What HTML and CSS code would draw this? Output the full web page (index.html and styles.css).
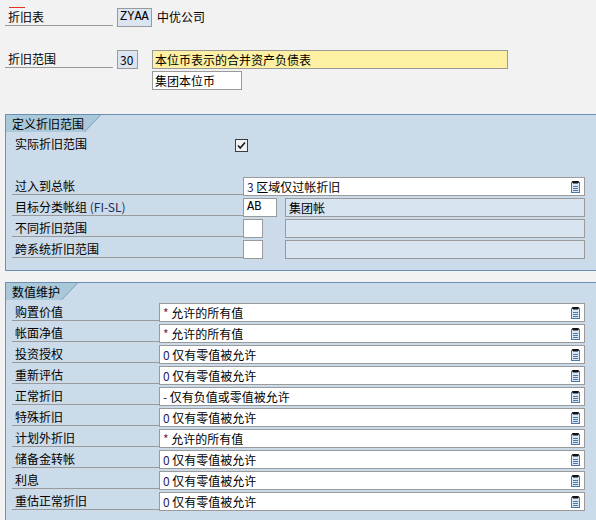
FILE: index.html
```html
<!DOCTYPE html>
<html lang="zh-CN">
<head>
    <meta charset="UTF-8">
    <title>折旧范围</title>
    <link rel="stylesheet" href="styles.css">
</head>
<body>
    <svg class="defs" width="0" height="0">
        <symbol id="f4" viewBox="0 0 9 12">
            <rect x="0.5" y="1.5" width="8" height="10" fill="#dbe7f3" stroke="#4c77a4"/>
            <path d="M2 5.5h5M2 7.5h5M2 9.5h5" stroke="#4c77a4"/>
            <path d="M1 0h7l-1 2.5h-5z" fill="#111"/>
        </symbol>
    </svg>

    <div class="mark"></div>
    <div class="hrow">
        <span class="hlabel">折旧表</span>
        <span class="key key-code">ZYAA</span>
        <span class="hdesc">中优公司</span>
    </div>
    <div class="hrow hrow-gap">
        <span class="hlabel">折旧范围</span>
        <span class="key key-num">30</span>
        <span class="hfield hfield-yellow">本位币表示的合并资产负债表</span>
    </div>
    <div class="hrow hrow-sub">
        <span class="hfield hfield-white">集团本位币</span>
    </div>

    <!-- 定义折旧范围 -->
    <section class="panel panel-def">
        <div class="tab"><span class="tab-inner">定义折旧范围</span></div>
        <div class="prow">
            <span class="plabel plabel-plain">实际折旧范围</span>
            <span class="check">
                <svg width="13" height="13" viewBox="0 0 13 13">
                    <rect x="0.5" y="0.5" width="12" height="12" fill="#eef2f7" stroke="#3c3c3c"/>
                    <path d="M3 6.5l2.2 2.5 4.8-5.5" fill="none" stroke="#1a1a1a" stroke-width="1.6"/>
                </svg>
            </span>
        </div>
        <div class="prow"></div>
        <div class="prow">
            <span class="plabel">过入到总帐</span>
            <span class="field field-wide"><b class="pre">3</b>&nbsp;区域仅过帐折旧<svg class="f4"><use href="#f4"/></svg></span>
        </div>
        <div class="prow">
            <span class="plabel">目标分类帐组 <span class="latin">(FI-SL)</span></span>
            <span class="field field-code">AB</span>
            <span class="field field-ro">集团帐</span>
        </div>
        <div class="prow">
            <span class="plabel">不同折旧范围</span>
            <span class="field field-tiny"></span>
            <span class="field field-ro field-ro-far"></span>
        </div>
        <div class="prow">
            <span class="plabel">跨系统折旧范围</span>
            <span class="field field-tiny"></span>
            <span class="field field-ro field-ro-far"></span>
        </div>
    </section>

    <!-- 数值维护 -->
    <section class="panel panel-val">
        <div class="tab"><span class="tab-inner">数值维护</span></div>
        <div class="prow"><span class="plabel plabel-short">购置价值</span><span class="field field-list"><b class="pre star">*</b>&nbsp;允许的所有值<svg class="f4"><use href="#f4"/></svg></span></div>
        <div class="prow"><span class="plabel plabel-short">帐面净值</span><span class="field field-list"><b class="pre star">*</b>&nbsp;允许的所有值<svg class="f4"><use href="#f4"/></svg></span></div>
        <div class="prow"><span class="plabel plabel-short">投资授权</span><span class="field field-list"><b class="pre">0</b>&nbsp;仅有零值被允许<svg class="f4"><use href="#f4"/></svg></span></div>
        <div class="prow"><span class="plabel plabel-short">重新评估</span><span class="field field-list"><b class="pre">0</b>&nbsp;仅有零值被允许<svg class="f4"><use href="#f4"/></svg></span></div>
        <div class="prow"><span class="plabel plabel-short">正常折旧</span><span class="field field-list"><b class="pre">-</b>&nbsp;仅有负值或零值被允许<svg class="f4"><use href="#f4"/></svg></span></div>
        <div class="prow"><span class="plabel plabel-short">特殊折旧</span><span class="field field-list"><b class="pre">0</b>&nbsp;仅有零值被允许<svg class="f4"><use href="#f4"/></svg></span></div>
        <div class="prow"><span class="plabel plabel-short">计划外折旧</span><span class="field field-list"><b class="pre star">*</b>&nbsp;允许的所有值<svg class="f4"><use href="#f4"/></svg></span></div>
        <div class="prow"><span class="plabel plabel-short">储备金转帐</span><span class="field field-list"><b class="pre">0</b>&nbsp;仅有零值被允许<svg class="f4"><use href="#f4"/></svg></span></div>
        <div class="prow"><span class="plabel plabel-short">利息</span><span class="field field-list"><b class="pre">0</b>&nbsp;仅有零值被允许<svg class="f4"><use href="#f4"/></svg></span></div>
        <div class="prow"><span class="plabel plabel-short">重估正常折旧</span><span class="field field-list"><b class="pre">0</b>&nbsp;仅有零值被允许<svg class="f4"><use href="#f4"/></svg></span></div>
    </section>
</body>
</html>
```

FILE: styles.css
```css
body {
    margin: 0;
    width: 596px;
    height: 520px;
    overflow: hidden;
    background-color: #f2f2f2;
    font-family: "Noto Sans CJK SC", sans-serif;
    font-size: 12px;
    line-height: 17px;
    color: #000;
}
.defs {
    position: absolute;
}

/* 抬头区 */
.mark {
    width: 16px;
    height: 1px;
    margin: 7px 0 0 9px;
    background-color: #e8321e;
}
.hrow {
    display: flex;
    height: 19px;
    margin-left: 5px;
}
.hrow-gap {
    margin-top: 23px;
}
.hrow-sub {
    margin-top: 2px;
    padding-left: 147px;
}
.hlabel {
    width: 108px;
    height: 18px;
    margin-right: 4px;
    padding-left: 3px;
    box-sizing: border-box;
    border-bottom: 1px solid #9a9a9a;
}
.key {
    height: 19px;
    padding: 0 2px;
    box-sizing: border-box;
    border: 1px solid #9a9a9a;
    background-color: #dbe5f1;
}
.key-code {
    width: 35px;
    font-family: "Liberation Mono", monospace;
}
.key-num {
    width: 21px;
}
.hdesc {
    margin-left: 5px;
}
.hfield {
    height: 19px;
    padding-left: 2px;
    box-sizing: border-box;
    border: 1px solid #9a9a9a;
}
.hfield-yellow {
    width: 356px;
    margin-left: 14px;
    background-color: #fdf0a2;
}
.hfield-white {
    width: 90px;
    background-color: #fff;
}

/* 分组框 */
.panel {
    margin-left: 5px;
    border: 1px solid #6d8fb6;
    border-right: none;
    background-color: #cbdbea;
}
.panel-def {
    margin-top: 24px;
    height: 155px;
}
.panel-val {
    margin-top: 11px;
    height: 260px;
}
.tab {
    width: 95px;
    height: 17px;
    margin-bottom: 3px;
    background-color: #7c9dc0;
    clip-path: polygon(0 0, 100% 0, calc(100% - 16px) 100%, 0 100%);
}
.panel-val .tab {
    width: 72px;
}
.tab-inner {
    display: block;
    height: 17px;
    padding-left: 6px;
    background-color: #a9c8da;
    clip-path: polygon(0 0, calc(100% - 1px) 0, calc(100% - 17px) 100%, 0 100%);
}
.prow {
    display: flex;
    height: 19px;
    margin-bottom: 2px;
    padding-left: 6px;
}
.plabel {
    width: 231px;
    height: 18px;
    padding-left: 3px;
    box-sizing: border-box;
    border-bottom: 1px solid #9a9a9a;
}
.plabel-plain {
    width: 223px;
    border-bottom: none;
}
.plabel-short {
    width: 147px;
}
.latin {
    color: #1c2a5a;
}
.check {
    height: 13px;
    margin-top: 3px;
}

/* 输入字段 */
.field {
    display: flex;
    align-items: center;
    height: 19px;
    padding: 0 3px;
    box-sizing: border-box;
    border: 1px solid #9a9a9a;
    background-color: #fff;
    white-space: nowrap;
}
.field-wide {
    width: 342px;
}
.field-list {
    width: 426px;
}
.field-code {
    width: 34px;
    font-family: "Liberation Mono", monospace;
}
.field-tiny {
    width: 20px;
}
.field-ro {
    width: 300px;
    margin-left: 8px;
    background-color: #d9e4f1;
}
.field-ro-far {
    margin-left: 22px;
}
.pre {
    font-weight: normal;
    color: #1e1e5e;
}
.star {
    color: #7a2a4a;
}
.f4 {
    width: 9px;
    height: 12px;
    margin-left: auto;
    margin-right: 1px;
}
```
